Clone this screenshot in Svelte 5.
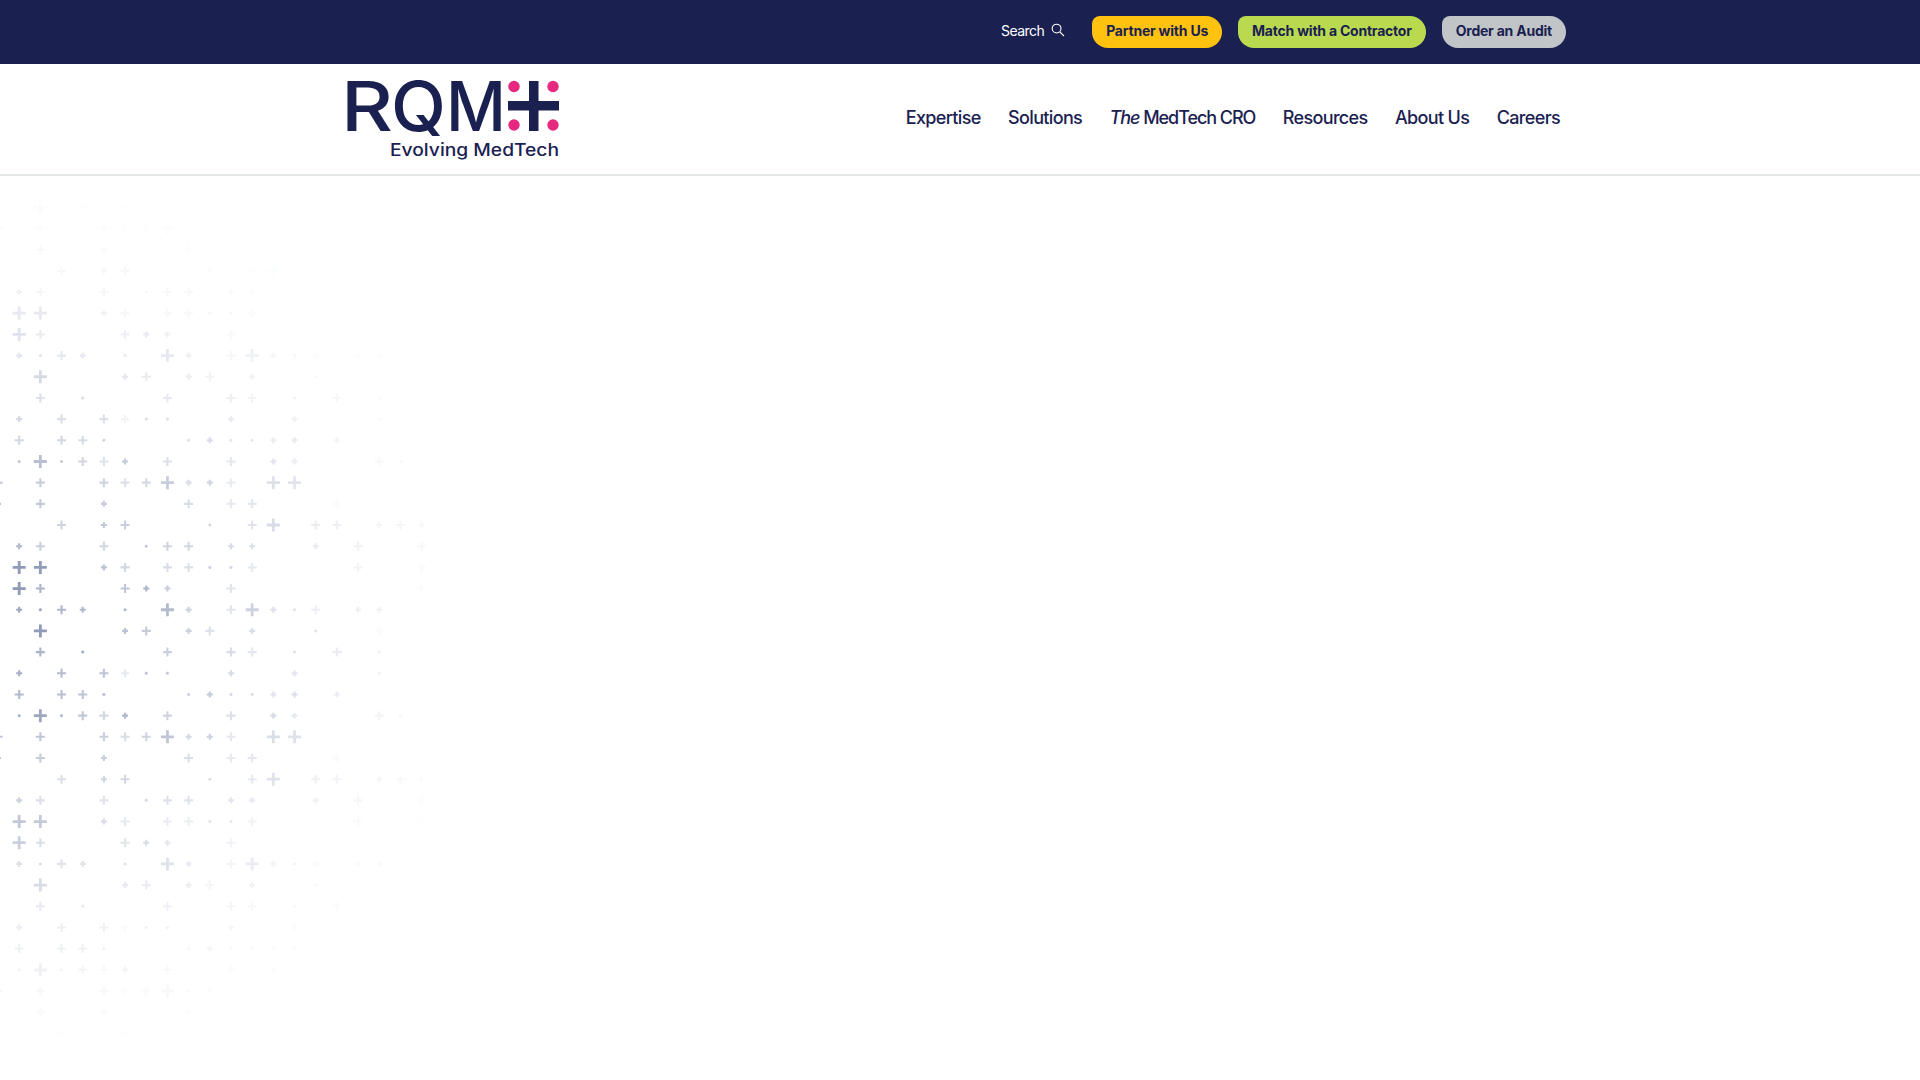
<script>
  const P = 21.18;
  const rows = [
    'M.M..MmMLsSm.LL......',
    's.M..s...M.mM...f....',
    'x..m.sM...x.ML.MM.sMs',
    'xsm..m.xMM.ss..s.M..M',
    '.LL..sm.mmxxm....m..m',
    '.LM...MSs..m........m',
    '.sxMs.x.Ls.mLsxm.ss..',
    '..L...sM.sm.s..x..f..',
    'x.M.x...M..Mm.x.M.x..',
    'xs.M.Mfxx..s..s...x..',
    '.M.MMx...xSxxsS.s....',
    '.xLxMmS.M..M.Ss...Mx.'
  ];
  const sizes = { x: 3, s: 6, m: 9, l: 13, f: 8 };
  const marks = [];
  for (let n = 0; n < 42; n++) {
    const cy = 186.14 + n * P;
    const rowStr = rows[(n + 10) % 12];
    for (let k = 0; k < rowStr.length; k++) {
      const ch = rowStr[k];
      if (ch === '.') continue;
      const low = ch.toLowerCase();
      const cx = -2 + k * P;
      const dx = (cx + 20) / 560;
      const dy = (cy - 625) / 470;
      const fade = Math.max(0, 1 - Math.sqrt(dx * dx + dy * dy));
      const base = { x: .7, s: .6, m: .42, l: .6, f: .22 }[low];
      const strong = ch !== low ? 1.35 : 1;
      const op = Math.min(.65, base * strong * Math.pow(fade, 1.6) * 1.05);
      if (op < 0.012) continue;
      const size = sizes[low];
      marks.push({ cx, cy, h: size / 2, w: size > 11 ? 2.8 : size > 4 ? 2.1 : 1.6, op: op.toFixed(3) });
    }
  }
  const nav = [
    { label: 'Expertise' },
    { label: 'Solutions' },
    { label: 'MedTech CRO', lead: 'The', tight: true },
    { label: 'Resources' },
    { label: 'About Us' },
    { label: 'Careers' }
  ];
</script>

<div class="page">
  <svg class="pattern" width="520" height="904" viewBox="0 176 520 904" aria-hidden="true">
    {#each marks as m}
      <path d="M{m.cx - m.h} {m.cy}H{m.cx + m.h}M{m.cx} {m.cy - m.h}V{m.cy + m.h}" stroke-width={m.w} opacity={m.op} />
    {/each}
  </svg>
  <header>
    <div class="top">
      <div class="inner topin">
        <span class="search">Search
          <svg width="14" height="14" viewBox="0 0 14 14" fill="none" stroke="#fff" stroke-width="1.1"><circle cx="5.6" cy="5.6" r="4.4"/><path d="M8.8 8.8 13 13"/></svg>
        </span>
        <a class="btn yellow" href="#a">Partner with Us</a>
        <a class="btn green" href="#b">Match with a Contractor</a>
        <a class="btn grey" href="#c">Order an Audit</a>
      </div>
    </div>
    <div class="main">
      <div class="inner mainin">
        <svg class="logo" width="216" height="80" viewBox="345 78 216 80">
          <text x="341" y="130" class="rqm" textLength="52" lengthAdjust="spacingAndGlyphs">R</text>
          <text x="391" y="130" class="rqm" textLength="55" lengthAdjust="spacingAndGlyphs">Q</text>
          <text x="446" y="130" class="rqm" textLength="60" lengthAdjust="spacingAndGlyphs">M</text>
          <rect x="508" y="100" width="51" height="9.5"/>
          <rect x="529" y="80" width="9.5" height="50"/>
          <circle cx="514" cy="85.5" r="5.7"/>
          <circle cx="553" cy="85.5" r="5.7"/>
          <circle cx="514" cy="124" r="5.7"/>
          <circle cx="553" cy="124" r="5.7"/>
          <text x="390" y="154.5" class="evo" textLength="169" lengthAdjust="spacingAndGlyphs">Evolving MedTech</text>
        </svg>
        <nav>
          {#each nav as item}
            <a href="#n" class:tight={item.tight}>{#if item.lead}<i>{item.lead}</i>{' '}{/if}{item.label}</a>
          {/each}
        </nav>
      </div>
    </div>
  </header>
</div>

<style>
  :global(body) { margin: 0; background: #fff; }
  .page { position: relative; width: 100%; height: 1080px; overflow: hidden; font-family: Inter, "Liberation Sans", sans-serif; color: #1a2151; }
  .pattern { position: absolute; left: 0; top: 176px; stroke: #52648f; fill: none; filter: blur(.5px); }
  .top { background: #1a2151; height: 64px; }
  .inner { width: 1221px; margin-left: 345px; display: flex; align-items: center; }
  .topin { height: 64px; justify-content: flex-end; }
  .search { color: #fff; font-size: 14px; line-height: 17px; letter-spacing: -.55px; display: flex; align-items: center; gap: 7px; margin-right: 27px; margin-top: -3px; }
  .search svg { margin-top: -2px; }
  .btn { height: 32px; box-sizing: border-box; display: flex; align-items: center; padding: 0 14px 3px; border-radius: 8px 16px 16px 16px; font-size: 14px; font-weight: 700; letter-spacing: -.22px; color: #1a2151; text-decoration: none; margin-left: 16px; }
  .btn.yellow { background: #ffc20e; margin-left: 0; }
  .btn.green { background: #b9d94e; }
  .btn.grey { background: #c1c5c8; }
  .main { height: 110px; background: #fff; border-bottom: 2px solid #e2e6e6; }
  .mainin { height: 110px; justify-content: space-between; }
  .logo { overflow: visible; margin-top: -1px; }
  .logo rect { fill: #1a2151; }
  .logo circle { fill: #e6287f; }
  .rqm { font: 500 69px Inter, sans-serif; fill: #1a2151; }
  .evo { font: 500 17px Inter, sans-serif; fill: #1a2151; }
  nav { display: flex; gap: 27.4px; margin-right: 6px; margin-top: -3px; }
  nav a { color: #1a2151; text-decoration: none; font-size: 18px; font-weight: 500; letter-spacing: -.65px; }
  nav a.tight { letter-spacing: -1.05px; }
</style>
